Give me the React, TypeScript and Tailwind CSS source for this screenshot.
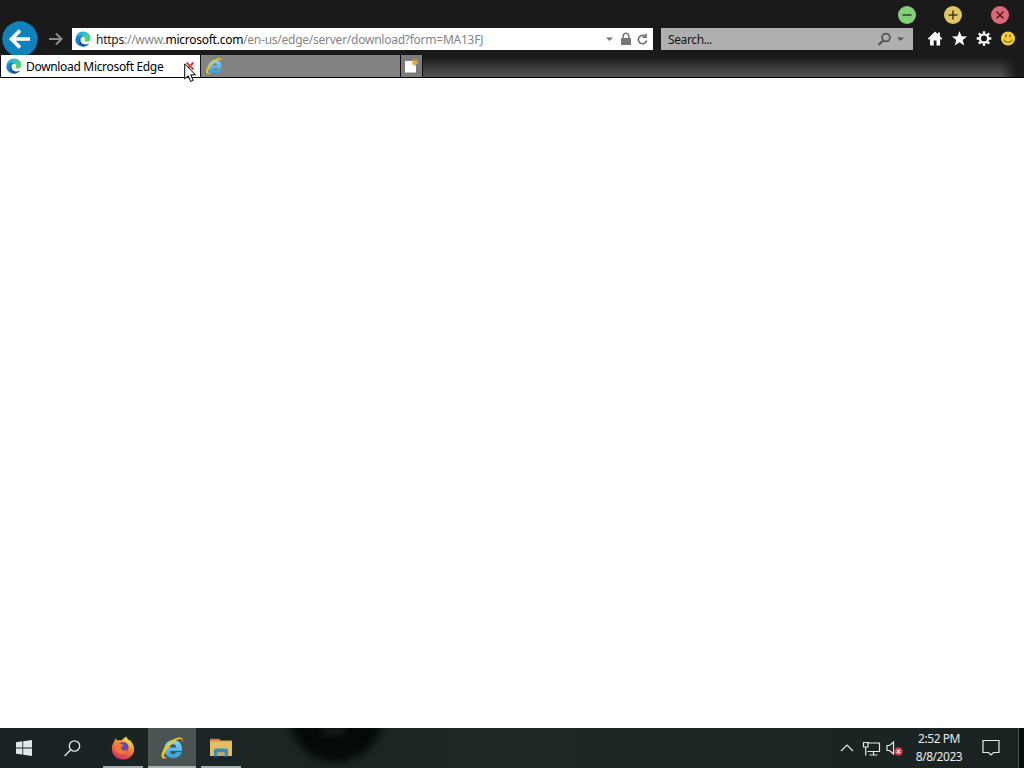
import type { ReactNode } from 'react'

function EdgeIcon() {
  return (
    <svg width="16" height="16" viewBox="0 0 16 16" className="shrink-0">
      <defs>
        <linearGradient id="edge-top" x1="0" y1="0" x2="1" y2="0.6">
          <stop offset="0" stopColor="#1d9ee0" />
          <stop offset="0.5" stopColor="#2fbfc8" />
          <stop offset="1" stopColor="#5cd45c" />
        </linearGradient>
      </defs>
      <path d="M0.6 7.2C1 3.2 4.2.4 8 .4c4.500 0 7.600 3.200 7.600 6.500 0 2.300-1.700 3.800-3.700 3.800-1.800 0-2.500-.6-2.500-1.100 0-.4.6-.7.6-1.700 0-1.500-1.700-3.200-4.300-3.200C3.400 4.700 1.400 5.800.6 7.200z" fill="url(#edge-top)" />
      <path d="M.4 8.300C.6 6 3 4.600 5.500 4.600c1.400 0 2.600.5 3.400 1.200-1.900-.2-3.600 1-3.600 3.200 0 3 2.800 5.200 6.300 4.600 1-.2 1.800-.5 2.600-1C12.800 14.600 10.500 15.700 8 15.700 3.700 15.700.2 12.400.4 8.300z" fill="#1681cf" />
      <path d="M5.300 9.100c0-1.500.7-2.600 1.800-3.100C5 7 3.800 9 4.300 11.300c.5 2.400 2.300 3.900 4.300 4.300 2.300-.2 4.300-1.300 5.600-3-.8.6-1.600.9-2.600 1-3.500.6-6.300-1.500-6.300-4.500z" fill="#154f9c" />
    </svg>
  )
}

function IeIcon({ size, id }: { size: number; id: string }) {
  return (
    <svg width={size} height={size} viewBox="0 0 24 24" className="shrink-0">
      <defs>
        <linearGradient id={id} x1="0" y1="0" x2="0" y2="1">
          <stop offset="0" stopColor="#80d8fa" />
          <stop offset="1" stopColor="#2e9fdf" />
        </linearGradient>
      </defs>
      <path d="M21.600 16.300c-1.100 3.700-4.100 5.900-8.400 5.900-5.200 0-8.900-3.600-8.900-8.900 0-5.400 3.800-9.300 9.100-9.300 5.300 0 8.600 3.600 8.600 9v1.900H10c.2 2.200 1.400 3.300 3.200 3.300 1.400 0 2.300-.6 2.800-1.900zM10 11.400h6.200c-.1-2-1.300-3.100-3-3.100-1.800 0-3 1.200-3.200 3.100z" fill={`url(#${id})`} />
      <path d="M22.600 6.400c.5-2.500 0-4.200-1.600-4.700-3.100-1-9.200 1.800-13.500 6.300C2.800 12.900.2 19.200 2.300 21.800c1 1.300 3.500 1.100 6-.3-2.100.5-3.300.4-3.800-.4-1.200-1.900 1-6.500 5-11C13.500 5.600 18.200 2.400 20.700 3.100c1.200.4 1.900 1.600 1.900 3.300z" fill="#efc529" />
    </svg>
  )
}

function FirefoxIcon() {
  return (
    <svg width="24" height="24" viewBox="0 0 24 24">
      <defs>
        <linearGradient id="fox" x1="0.8" y1="0" x2="0.3" y2="1">
          <stop offset="0" stopColor="#f6df4a" />
          <stop offset="0.35" stopColor="#f59a32" />
          <stop offset="0.7" stopColor="#e9584b" />
          <stop offset="1" stopColor="#cf3169" />
        </linearGradient>
      </defs>
      <path d="M3.800 4.700C4 3.500 4.600 2.400 5 2c.1 1.300.6 2 1.400 2.600 1.500-.5 3-.5 4 0C11.800 2.800 13.600 1.400 15.500.5c0 2 .9 3 2.200 4.500.1-.7 0-1.200-.1-1.800 3.500 2.500 5.600 6 5.600 9.700C23.200 19 18.300 23.500 12 23.500S.8 19 .8 12.800C.8 9.600 1.900 7 3.800 4.700z" fill="url(#fox)" />
      <circle cx="12" cy="11.500" r="5.500" fill="#6747b8" />
      <path d="M3.500 8c2-1.500 4.700-1.500 6.700.2l2.600.5c-.4 1.300-1.200 1.700-2.300 2-.8 1.200-.5 2.900 1.500 3.600 1.800.6 3.300-.2 4.500-1.100-1 3.800-4 5.400-7.300 4.600C5 16.700 3 12.800 3.500 8z" fill="#f07a38" />
      <path d="M13 5.500c4 .3 6.800 4 5.800 7.900 1.800-2.500 1.700-5.700-.5-7.900L15.500 1c-.3 2-1.300 3.500-2.500 4.500z" fill="#f2cc40" />
    </svg>
  )
}

function FolderIcon() {
  return (
    <svg width="22" height="19" viewBox="0 0 22 19">
      <path d="M0 1.200h9l1.500 1.300H22V18H0z" fill="#d99f35" />
      <path d="M0 .8h9.500v1.900H0z" fill="#dd7a3a" />
      <path d="M0 3.500h22V18H0z" fill="#e2bd66" />
      <path d="M4 18.500V12.500a2 2 0 0 1 2-2h10a2 2 0 0 1 2 2v6h-3.500V14.500h-7v4z" fill="#3c88bd" />
      <path d="M7.500 14.500h7V18h-7z" fill="#c8a863" />
    </svg>
  )
}

function WindowButton({ className, children }: { className: string; children: ReactNode }) {
  return (
    <button className={`flex h-[18px] w-[18px] items-center justify-center rounded-full ${className}`}>
      <svg width="18" height="18" viewBox="0 0 18 18" fill="none" strokeWidth="1.5">
        {children}
      </svg>
    </button>
  )
}

function TitleBar() {
  return (
    <div className="flex h-7 shrink-0 justify-end pt-1.5 pr-[15px]">
      <WindowButton className="mr-7 bg-[#86ce7b]">
        <path d="M4.500 9h9" stroke="#1f4a1b" />
      </WindowButton>
      <WindowButton className="mr-[29px] bg-[#dfc566]">
        <path d="M4.500 9h9M9 4.500v9" stroke="#4b3713" />
      </WindowButton>
      <WindowButton className="bg-[#dc6878]">
        <path d="M5.500 5.500l7 7M12.500 5.500l-7 7" stroke="#54141d" />
      </WindowButton>
    </div>
  )
}

function AddressRow() {
  return (
    <div className="flex h-[22px] shrink-0 items-center">
      <div className="relative h-full w-[72px] shrink-0">
        <svg width="72" height="38" viewBox="0 0 72 38" fill="none" className="absolute -top-2 left-0">
          <circle cx="20" cy="19" r="17.700" fill="#0f82bc" />
          <path d="M30 19H12M20 10.500L11.500 19l8.500 8.500" stroke="#fff" strokeWidth="3.600" />
          <path d="M49 19h12M56 13.500l5.500 5.500-5.500 5.500" stroke="#8b8b8b" strokeWidth="2" />
        </svg>
      </div>

      <div className="flex h-full w-[581px] shrink-0 items-center bg-white pr-1 pl-[3px]">
        <EdgeIcon />
        <span className="ml-[5px] flex-1 pt-px text-[12px] leading-[22px] tracking-[-0.25px] whitespace-nowrap text-[#858585]">
          <span className="text-[#222]">https</span>://www.<span className="text-black">microsoft.com</span>
          /en-us/edge/server/download?form=MA13FJ
        </span>
        <svg width="44" height="16" viewBox="0 0 44 16">
          <path d="M1 6.500h7L4.500 10z" fill="#777" />
          <path d="M16 7h10v7H16z" fill="#777" />
          <path d="M18.200 7.500V5a2.800 2.800 0 0 1 5.600 0v2.500" fill="none" stroke="#777" strokeWidth="1.500" />
          <path d="M40.500 5.500A4.200 4.200 0 1 0 41.700 9.500" fill="none" stroke="#777" strokeWidth="1.700" />
          <path d="M41.800 2v5h-5z" fill="#777" />
        </svg>
      </div>

      <div className="ml-2 flex h-full w-[252px] shrink-0 items-center bg-[#afafaf] pr-2 pl-[7px]">
        <span className="flex-1 pt-px text-[12px] leading-[22px] tracking-[-0.38px] text-[#161616]">Search...</span>
        <svg width="28" height="16" viewBox="0 0 28 16">
          <circle cx="9" cy="6.500" r="3.900" fill="none" stroke="#555" strokeWidth="1.800" />
          <path d="M6.300 9.200L1.500 14" stroke="#555" strokeWidth="2.200" />
          <path d="M20 6.500h7L23.500 10z" fill="#555" />
        </svg>
      </div>

      <svg width="90" height="18" viewBox="0 0 90 18" className="ml-[14px] shrink-0">
        <path d="M8 1.500L.8 8.700l1.100 1.100 1.200-1V15.500h3.600V10.500h2.800v5h3.600V8.800l1.200 1 1.100-1.100-2.500-2.500V2.600h-2v1.600z" fill="#fff" />
        <path d="M32.500 1l2 5.300 5.600.2-4.400 3.500 1.500 5.500-4.700-3.200-4.700 3.200 1.500-5.500-4.400-3.500 5.600-.2z" fill="#fff" />
        <circle cx="57" cy="8.500" r="4.100" fill="none" stroke="#fff" strokeWidth="2.200" />
        <path
          d="M57 1.200v2.300M57 13.500v2.300M49.700 8.500H52M62 8.500h2.300M51.800 3.300l1.700 1.700M60.500 12l1.700 1.700M62.200 3.300L60.500 5M53.500 12l-1.700 1.700"
          stroke="#fff"
          strokeWidth="2.400"
        />
        <circle cx="81" cy="8.500" r="7" fill="#f4cf3c" />
        <path d="M79 4.500v3M83 4.500v3" stroke="#8a6116" strokeWidth="1.400" />
        <path d="M76.800 9.500c1.200 3.800 7.200 3.800 8.400 0" fill="none" stroke="#a5791c" strokeWidth="1.100" />
      </svg>
    </div>
  )
}

function TabStrip() {
  return (
    <div className="relative mt-[5px] flex h-[23px] shrink-0 gap-px border-b border-black bg-[#111] pl-px">
      <div className="flex w-[199px] shrink-0 items-center bg-white pl-[5px]">
        <EdgeIcon />
        <span className="ml-1 flex-1 pt-px text-[12px] leading-[22px] tracking-[-0.32px] whitespace-nowrap text-black">
          Download Microsoft Edge
        </span>
        <svg width="10" height="10" viewBox="0 0 10 10" className="mr-[5px]">
          <path d="M1.500 1.500l7 7M8.500 1.500l-7 7" stroke="#cb4b48" strokeWidth="2.200" />
        </svg>
      </div>
      <div className="flex w-[199px] shrink-0 items-center bg-[#838383] pl-[4px]">
        <IeIcon size={18} id="ie-tab" />
      </div>
      <div className="flex w-[21px] shrink-0 items-center justify-center bg-[#7c7c7c]">
        <svg width="15" height="16" viewBox="0 0 15 16" className="-mt-px">
          <path d="M1 3h8l3 3v8.500H1z" fill="#fff" />
          <path d="M10.500 0l1 2.500 2.800-.8-1.500 2.500L15 6l-2.800.3-.7 2.500-1.500-2.300-2.700.3 1.500-2.300L7.500 2.300l2.500.2z" fill="#dfa845" />
        </svg>
      </div>
      <div className="flex flex-1 justify-end bg-linear-to-b from-[#1c1c1c] from-15% via-[#363636] to-[#545454]">
        {/* The glow fades out before the window edge */}
        <div className="h-full w-6 bg-linear-to-r from-[#1a1a1a]/0 to-[#1a1a1a] to-70%" />
      </div>

      {/* Mouse pointer */}
      <svg width="13" height="20" viewBox="0 0 13 20" className="absolute top-2 left-[184px]">
        <path d="M.7 1v15l3.500-3.300 2.500 5.800 2.500-1.100-2.500-5.600h4.800z" fill="#fff" stroke="#000" />
      </svg>
    </div>
  )
}

function Taskbar() {
  return (
    <footer className="relative flex h-10 shrink-0 overflow-hidden bg-linear-to-r from-[#192323] via-[#1d2726] to-[#1a2322]">
      {/* Dark wallpaper shape showing through */}
      <div className="absolute -top-[62px] left-[289px] h-[96px] w-[94px] rounded-[50%] bg-[#030a09] blur-[4px]" />
      <div className="absolute -top-1 left-[322px] h-3 w-6 rounded-full bg-[#141a19] blur-[3px]" />

      <div className="flex h-full w-12 items-center justify-center">
        <svg width="16" height="16" viewBox="0 0 16 16" fill="#dfe8e8">
          <path d="M0 2.200L6.400 1.300v6.200H0zM7.200 1.200L16 0v7.500H7.200zM0 8.400h6.400v6.200L0 13.700zM7.200 8.400H16V16l-8.800-1.200z" />
        </svg>
      </div>
      <div className="flex h-full w-[55px] items-center pl-4">
        <svg width="17" height="17" viewBox="0 0 17 17" fill="none" stroke="#e5eaea" strokeWidth="1.300">
          <circle cx="10.500" cy="6" r="5.200" />
          <path d="M6.700 9.800L.6 16" />
        </svg>
      </div>
      <div className="flex h-full w-10 items-center justify-center border-b-2 border-[#a5aeae] pt-px">
        <FirefoxIcon />
      </div>
      <div className="ml-[5px] flex h-full w-12 items-center justify-center border-b-2 border-[#aab2b1] bg-[#4a5452] pt-px">
        <IeIcon size={24} id="ie-task" />
      </div>
      <div className="ml-[5px] flex h-full w-10 items-center justify-center border-b-2 border-[#a5aeae] pt-px">
        <FolderIcon />
      </div>

      <div className="ml-auto flex h-full items-center text-[#e6eaea]">
        <svg width="64" height="20" viewBox="0 0 64 20" fill="none" stroke="currentColor" strokeWidth="1.200">
          <path d="M1 13l6-6 6 6" />
          <path d="M27 5h12.500v8.500h-12M33.500 13.500v3.500M29.500 17h8" />
          <path d="M23.500 4.500h4.500v4.500h-4.500zM25.700 9v8.500" />
          <path d="M47 7.500h2.500l4-3.500v12l-4-3.500H47z" />
          <circle cx="58.500" cy="13.500" r="4.300" fill="#c8394c" stroke="none" />
          <path d="M56.700 11.700l3.600 3.600M60.300 11.700l-3.600 3.600" stroke="#fff" />
        </svg>
        <div className="ml-[7px] w-[56px] text-center text-[12px] leading-[18px] tracking-[-0.45px] whitespace-nowrap">
          <div>2:52 PM</div>
          <div>8/8/2023</div>
        </div>
        <svg width="18" height="18" viewBox="0 0 18 18" fill="none" stroke="currentColor" strokeWidth="1.200" className="ml-[15px]">
          <path d="M1 1.500h16v12h-5.500L9 16l-2.500-2.500H1z" />
        </svg>
        {/* Show desktop strip */}
        <div className="ml-[18px] h-full w-[6px] border-l border-[#4a5251] bg-[#060b0b]" />
      </div>
    </footer>
  )
}

export default function App() {
  return (
    <div className="flex h-[768px] w-[1024px] flex-col overflow-hidden bg-white font-['Noto_Sans','Open_Sans',sans-serif]">
      <header className="flex h-[78px] shrink-0 flex-col bg-[#1a1a1a]">
        <TitleBar />
        <AddressRow />
        <TabStrip />
      </header>
      <main className="flex-1 bg-white" />
      <Taskbar />
    </div>
  )
}
